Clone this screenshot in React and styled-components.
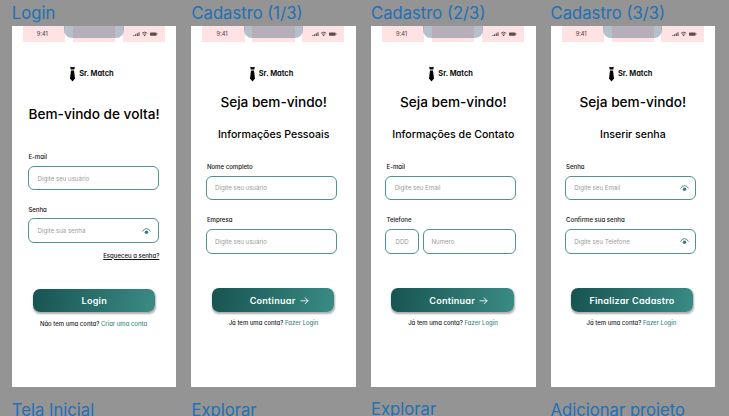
import React from "react";
import styled, { createGlobalStyle } from "styled-components";

const GlobalStyle = createGlobalStyle`
  * { box-sizing: border-box; }
  body { margin: 0; background: #949494; font-family: Inter, sans-serif; overflow: hidden; }
`;

const Canvas = styled.main`
  display: grid;
  grid-template-columns: repeat(4, 164.6px);
  column-gap: 15px;
  width: 729px;
  height: 416px;
  padding: 3px 0 0 11.8px;
  overflow: hidden;
  align-content: start;
`;
const Column = styled.section`
  display: flex;
  flex-direction: column;
`;
const Caption = styled.h2`
  margin: 0;
  height: 20px;
  font-size: 16.65px;
  font-weight: 400;
  line-height: 20px;
  color: #2270b5;
  white-space: nowrap;
`;
const NextCaption = styled(Caption)`
  margin-top: ${(p) => 13.2 - (p.$raise || 0)}px;
`;
const Board = styled.article`
  display: flex;
  flex-direction: column;
  height: 361.5px;
  margin-top: 2.5px;
  background: #fff;
`;

const StatusBar = styled.div`
  position: relative;
  display: flex;
  justify-content: space-between;
  flex: none;
  height: 16.5px;
  padding: 0 11.5px 0 11px;
`;
const StatusCell = styled.div`
  display: flex;
  align-items: center;
  justify-content: center;
  width: 42.2px;
  padding-top: 1px;
  background: #ffe2e4;
  color: #5d4b4e;
  font-size: 5.6px;
  font-weight: 500;
`;
const TimeCell = styled(StatusCell)`
  padding-right: 3px;
`;
const SignalCell = styled(StatusCell)`
  padding-left: 3px;
`;
const Notch = styled.div`
  position: absolute;
  top: 0;
  left: 52.3px;
  width: 59.5px;
  height: 12.5px;
  border-radius: 0 0 8px 8px;
  background: rgba(82, 105, 128, 0.42);
`;

const Brand = styled.div`
  display: flex;
  align-items: center;
  gap: 3.2px;
  height: 16px;
  margin: 23.5px 0 0 57.2px;
  font-size: 7.4px;
  font-weight: 700;
  font-feature-settings: "cv11";
  white-space: nowrap;
  color: #111;
`;
const BrandName = styled.span`
  position: relative;
  top: -0.5px;
`;
const Title = styled.h1`
  margin: ${(p) => p.$top}px 0 0;
  font-size: 13.62px;
  font-weight: 460;
  line-height: 18px;
  text-align: center;
  white-space: nowrap;
  color: #000;
`;
const Subtitle = styled.h3`
  margin: ${(p) => p.$top}px 0 0;
  font-size: 10.6px;
  font-weight: 460;
  line-height: 14px;
  text-align: center;
  white-space: nowrap;
  color: #000;
`;

const Form = styled.form`
  display: flex;
  flex-direction: column;
  width: 131px;
  margin: ${(p) => (p.$login ? "29.4px 0 0 16.6px" : `${p.$top}px 0 0 14.5px`)};
`;
const Group = styled.div`
  display: flex;
  flex-direction: column;
  gap: ${(p) => (p.$login ? 3.3 : 4)}px;
  & + & { margin-top: ${(p) => (p.$login ? 15 : 14.5)}px; }
`;
const Label = styled.label`
  height: 10px;
  padding-left: ${(p) => (p.$inset ? 1 : 0)}px;
  font-size: 6.05px;
  font-weight: 500;
  font-feature-settings: "cv11";
  line-height: 10px;
  white-space: nowrap;
  color: #111;
`;
const FieldRow = styled.div`
  display: flex;
  gap: 4px;
`;
const Field = styled.div`
  display: flex;
  align-items: center;
  justify-content: space-between;
  flex: ${(p) => (p.$width ? `0 0 ${p.$width}px` : "1")};
  height: 24.8px;
  padding: 0 ${(p) => p.$end || 7.5}px 0 ${(p) => p.$pad || 8.2}px;
  border: 1px solid #4f9390;
  border-radius: 6px;
  font-size: 6.12px;
  white-space: nowrap;
  color: #9b9b9b;
`;
const Forgot = styled.a`
  align-self: flex-end;
  height: 10px;
  margin-top: 7.6px;
  font-size: 6.02px;
  font-weight: 500;
  font-feature-settings: "cv11";
  line-height: 10px;
  text-decoration: underline;
  text-decoration-thickness: 0.6px;
  text-underline-offset: 1px;
  white-space: nowrap;
  color: #111;
`;

const Submit = styled.button`
  display: flex;
  align-items: center;
  justify-content: center;
  gap: 4px;
  flex: none;
  width: 122.5px;
  height: 23.5px;
  margin: ${(p) => (p.$login ? "28.2px 0 0 21.2px" : "34.8px 0 0 20.2px")};
  padding: 0 0 0 ${(p) => (p.$arrow ? 12.5 : 0)}px;
  border: 0;
  border-radius: 7px;
  background: linear-gradient(100deg, #175451, #3b8b85);
  box-shadow: 0.8px 1.5px 2px rgba(0, 0, 0, 0.32);
  color: #fff;
  font: 600 9.05px Inter, sans-serif;
  font-feature-settings: "cv11";
  letter-spacing: 0.25px;
  white-space: nowrap;
`;
const Footer = styled.p`
  height: 10px;
  margin: ${(p) => p.$top}px 0 0 ${(p) => p.$left}px;
  font-size: 5.98px;
  font-weight: 500;
  font-feature-settings: "cv11";
  line-height: 10px;
  white-space: nowrap;
  color: #1c1c1c;
`;
const FooterLink = styled.a`
  color: #3f8b84;
`;

const Tie = () => (
  <svg width="7" height="16" viewBox="0 0 7 16" fill="#050505">
    <path d="M1.2.8Q3.5 1.6 5.8.8L5.3 3.6H1.7Z" />
    <path d="M2 4.4h3L6 12.6 3.5 15.4 1 12.6Z" />
  </svg>
);
const Signals = () => (
  <svg width="25" height="6" viewBox="0 0 25 6" fill="none" stroke="#5d4b4e">
    <path d="M.9 5V4M2.6 5V3.3M4.3 5V2.3M6 5V1.2" strokeWidth="1.1" />
    <path d="M9 2.2Q11.6.1 14.2 2.2M10.1 3.4Q11.6 2.2 13.1 3.4" strokeWidth=".9" />
    <circle cx="11.6" cy="4.5" r=".7" fill="#5d4b4e" stroke="none" />
    <rect x="17" y="1.4" width="6.6" height="3.3" rx=".7" fill="#5d4b4e" stroke="none" />
    <path d="M24.2 2.4v1.3" strokeWidth=".6" />
  </svg>
);
const Eye = () => (
  <svg width="9" height="8" viewBox="0 0 9 8" fill="none" stroke="#3c807d">
    <path d="M.7 4.2Q2 1.6 4.5 1.6T8.3 4.2" strokeWidth=".9" strokeLinecap="round" />
    <circle cx="4.5" cy="5.2" r="1.8" fill="#3c807d" stroke="none" />
  </svg>
);
const Arrow = () => (
  <svg width="9" height="9" viewBox="0 0 9 9" fill="none" stroke="#fff" strokeWidth=".85" strokeLinecap="round" strokeLinejoin="round">
    <path d="M.9 4.8H8M5.1 1.8 8 4.8 5.1 7.8" />
  </svg>
);

const screens = [
  {
    name: "Login", next: "Tela Inicial", login: true, title: "Bem-vindo de volta!", titleTop: 23.5,
    groups: [
      { label: "E-mail", fields: [{ text: "Digite seu usuário" }] },
      { label: "Senha", fields: [{ text: "Digite sua senha", eye: true }] },
    ],
    forgot: "Esqueceu a senha?", action: "Login",
    question: "Não tem uma conta?", link: "Criar uma conta", footTop: 6.6, footLeft: 28.1,
  },
  {
    name: "Cadastro (1/3)", next: "Explorar", title: "Seja bem-vindo!", subtitle: "Informações Pessoais", titleTop: 11, subTop: 17.6, formTop: 19.5,
    groups: [
      { label: "Nome completo", fields: [{ text: "Digite seu usuário" }] },
      { label: "Empresa", fields: [{ text: "Digite seu usuário" }] },
    ],
    action: "Continuar", arrow: true,
    question: "Já tem uma conta?", link: "Fazer Login", footTop: 5.8, footLeft: 37.3,
  },
  {
    name: "Cadastro (2/3)", next: "Explorar", raise: 1, title: "Seja bem-vindo!", subtitle: "Informações de Contato", titleTop: 11.6, subTop: 17.3, formTop: 19.2,
    groups: [
      { label: "E-mail", fields: [{ text: "Digite seu Email" }] },
      { label: "Telefone", fields: [{ text: "DDD", width: 33.5, pad: 9 }, { text: "Número", pad: 7.5 }] },
    ],
    action: "Continuar", arrow: true,
    question: "Já tem uma conta?", link: "Fazer Login", footTop: 5.8, footLeft: 37.2,
  },
  {
    name: "Cadastro (3/3)", next: "Adicionar projeto", title: "Seja bem-vindo!", subtitle: "Inserir senha", titleTop: 11.6, subTop: 17.3, formTop: 19.2,
    groups: [
      { label: "Senha", fields: [{ text: "Digite seu Email", eye: true, end: 5.8 }] },
      { label: "Confirme sua senha", fields: [{ text: "Digite seu Telefone", eye: true, end: 5.8 }] },
    ],
    action: "Finalizar Cadastro",
    question: "Já tem uma conta?", link: "Fazer Login", footTop: 6.1, footLeft: 36,
  },
];

function Screen({ s }) {
  return (
    <Column>
      <Caption>{s.name}</Caption>
      <Board>
        <StatusBar>
          <TimeCell>9:41</TimeCell>
          <StatusCell />
          <SignalCell><Signals /></SignalCell>
          <Notch />
        </StatusBar>
        <Brand><Tie /><BrandName>Sr. Match</BrandName></Brand>
        <Title $top={s.titleTop}>{s.title}</Title>
        {s.subtitle && <Subtitle $top={s.subTop}>{s.subtitle}</Subtitle>}
        <Form $login={s.login} $top={s.formTop}>
          {s.groups.map((g) => (
            <Group key={g.label} $login={s.login}>
              <Label $inset={!s.login}>{g.label}</Label>
              <FieldRow>
                {g.fields.map((f) => (
                  <Field key={f.text} $width={f.width} $pad={f.pad} $end={f.end}>
                    {f.text}
                    {f.eye && <Eye />}
                  </Field>
                ))}
              </FieldRow>
            </Group>
          ))}
          {s.forgot && <Forgot>{s.forgot}</Forgot>}
        </Form>
        <Submit $login={s.login} $arrow={s.arrow} type="button">
          {s.action}
          {s.arrow && <Arrow />}
        </Submit>
        <Footer $top={s.footTop} $left={s.footLeft}>
          {s.question} <FooterLink>{s.link}</FooterLink>
        </Footer>
      </Board>
      <NextCaption $raise={s.raise}>{s.next}</NextCaption>
    </Column>
  );
}

export default function App() {
  return (
    <>
      <GlobalStyle />
      <Canvas>
        {screens.map((s) => <Screen key={s.name} s={s} />)}
      </Canvas>
    </>
  );
}
